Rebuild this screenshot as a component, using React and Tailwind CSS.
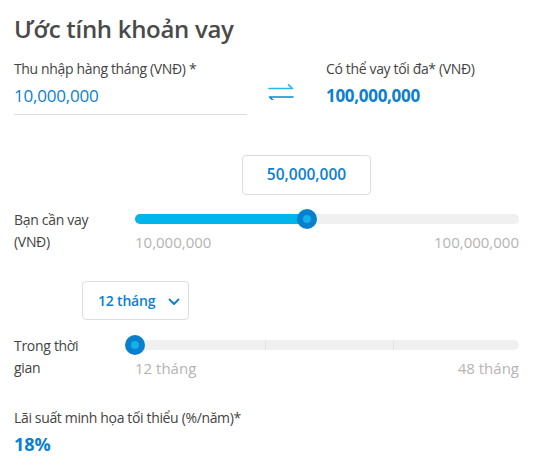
import React from "react";

function SwapIcon() {
  return (
    <svg width="26" height="16" viewBox="0 0 26 16" fill="none">
      <path d="M1 4.5 H24.5 L20.5 0.8" stroke="#29b6ee" strokeWidth="1.6" strokeLinecap="round" strokeLinejoin="round" />
      <path d="M25 13 H1.5 L5.5 16.6" stroke="#0b86d4" strokeWidth="1.6" strokeLinecap="round" strokeLinejoin="round" />
    </svg>
  );
}

function Thumb() {
  return (
    <div className="w-[20px] h-[20px] rounded-full bg-[#0a7fcc] flex items-center justify-center">
      <div className="w-[8px] h-[8px] rounded-full bg-[#13b0ec]" />
    </div>
  );
}

export default function App() {
  return (
    <div
      className="w-[535px] h-[474px] bg-white pl-[14px] pr-[16px] text-[#3c3c3c]"
      style={{ fontFamily: '"Open Sans", "Noto Sans", sans-serif' }}
    >
      <h1 className="pt-[13px] text-[24px] leading-[32px] font-semibold text-[#4a4a4a] tracking-[-0.3px]">
        Ước tính khoản vay
      </h1>

      <div className="flex mt-[14px]">
        <div className="w-[233px] border-b border-[#dcdcdc] pb-[6px]">
          <div className="text-[14px] leading-[20px] text-[#444] tracking-[-0.35px]">Thu nhập hàng tháng (VNĐ) *</div>
          <div className="mt-[5px] text-[17px] leading-[24px] text-[#0b7fd0] tracking-[-0.2px]">10,000,000</div>
        </div>
        <div className="ml-[21px] mt-[25px] w-[26px]">
          <SwapIcon />
        </div>
        <div className="ml-[32px]">
          <div className="text-[14px] leading-[20px] text-[#444] tracking-[-0.35px]">Có thể vay tối đa* (VNĐ)</div>
          <div className="mt-[5px] text-[17px] leading-[24px] font-bold text-[#0b7fd0] tracking-[-0.3px]">100,000,000</div>
        </div>
      </div>

      <div className="flex mt-[40px]">
        <div className="w-[121px]" />
        <div className="flex-1">
          <div className="ml-[107px] w-[129px] h-[40px] border border-[#dedede] rounded-[4px] flex items-center justify-center text-[15.5px] font-semibold text-[#0b7fd0]">
            50,000,000
          </div>
        </div>
      </div>

      <div className="flex mt-[14px]">
        <div className="w-[121px] text-[14px] leading-[22px] text-[#444] tracking-[-0.3px]">
          <div>Bạn cần vay</div>
          <div>(VNĐ)</div>
        </div>
        <div className="flex-1">
          <div className="relative h-[20px] flex items-center">
            <div className="w-full h-[10px] rounded-full bg-[#f0f0f0]" />
            <div className="absolute left-0 top-[5px] h-[10px] w-[172px] rounded-full bg-[#00b4ec]" />
            <div className="absolute left-[162px] top-0">
              <Thumb />
            </div>
          </div>
          <div className="flex justify-between mt-[3px] text-[15px] leading-[20px] text-[#b4b4b4]">
            <span>10,000,000</span>
            <span>100,000,000</span>
          </div>
        </div>
      </div>

      <div className="mt-[28px] ml-[68px] w-[107px] h-[39px] border border-[#dedede] rounded-[4px] flex items-center pl-[15px] text-[14px] font-semibold text-[#0b7fd0] tracking-[-0.2px]">
        <span>12 tháng</span>
        <svg className="ml-[13px] mt-[2px]" width="12" height="8" viewBox="0 0 12 8" fill="none">
          <path d="M1.5 1.5 L6 6 L10.5 1.5" stroke="#0b7fd0" strokeWidth="1.8" strokeLinecap="round" strokeLinejoin="round" />
        </svg>
      </div>

      <div className="flex mt-[15px]">
        <div className="w-[121px] text-[14px] leading-[22px] text-[#444] tracking-[-0.3px]">
          <div>Trong thời</div>
          <div>gian</div>
        </div>
        <div className="flex-1">
          <div className="relative h-[20px] flex items-center">
            <div className="w-full h-[10px] rounded-full bg-[#f0f0f0]" />
            <div className="absolute left-[130px] top-[5px] w-[1px] h-[10px] bg-[#d6e6f0]" />
            <div className="absolute left-[258px] top-[5px] w-[1px] h-[10px] bg-[#d6e6f0]" />
            <div className="absolute left-[-10px] top-0">
              <Thumb />
            </div>
          </div>
          <div className="flex justify-between mt-[3px] text-[15px] leading-[20px] text-[#b4b4b4]">
            <span>12 tháng</span>
            <span>48 tháng</span>
          </div>
        </div>
      </div>

      <div className="mt-[29px] text-[14px] leading-[20px] text-[#444] tracking-[-0.35px]">Lãi suất minh họa tối thiểu (%/năm)*</div>
      <div className="mt-[4px] text-[18px] leading-[24px] font-bold text-[#0b7fd0]">18%</div>
    </div>
  );
}
